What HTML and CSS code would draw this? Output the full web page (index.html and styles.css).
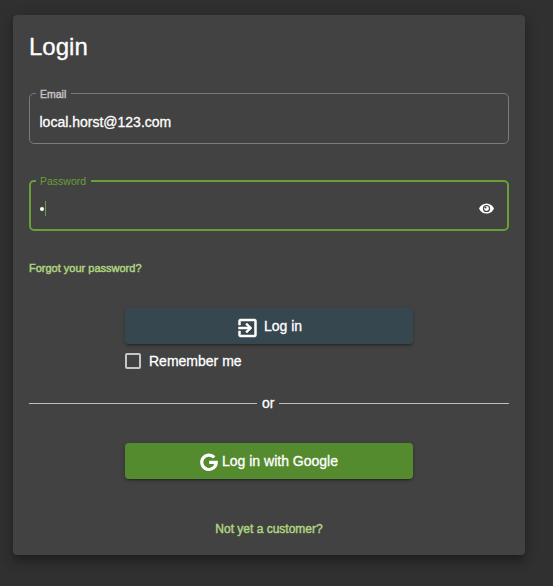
FILE: index.html
```html
<!DOCTYPE html>
<html lang="en">
<head>
<meta charset="utf-8">
<title>Login</title>
<link rel="stylesheet" href="styles.css">
</head>
<body>
<main class="card">
  <h1 class="title">Login</h1>
  <fieldset class="field">
    <legend class="label">Email</legend>
    <div class="control"><span class="value">local.horst@123.com</span></div>
  </fieldset>
  <fieldset class="field field-focused">
    <legend class="label">Password</legend>
    <div class="control">
      <span class="dot"></span><span class="caret"></span>
      <svg class="eye" viewBox="1 4 22 16"><path fill="#fff" fill-rule="evenodd" d="M12 4.500C7 4.500 2.700 7.600 1 12c1.700 4.400 6 7.500 11 7.500s9.300-3.100 11-7.500c-1.700-4.400-6-7.500-11-7.500zM12 17.300a5.300 5.300 0 1 1 0-10.600 5.300 5.300 0 0 1 0 10.600z"/><circle cx="12" cy="12" r="3.600" fill="#fff"/><circle cx="10.600" cy="10.600" r="1.500" fill="#424242"/></svg>
    </div>
  </fieldset>
  <a class="link forgot">Forgot your password?</a>
  <div class="actions">
    <button class="button button-login">
      <svg class="login-icon" viewBox="3 3 18 18" fill="#fff" stroke="#fff" stroke-width=".5"><path d="M10.090 15.590L11.500 17l5-5-5-5-1.410 1.410L12.670 11H3v2h9.670l-2.580 2.590zM19 3H5a2 2 0 0 0-2 2v4h2V5h14v14H5v-4H3v4a2 2 0 0 0 2 2h14a2 2 0 0 0 2-2V5a2 2 0 0 0-2-2z"/></svg>
      <span>Log in</span>
    </button>
    <label class="remember"><span class="checkbox"></span><span>Remember me</span></label>
  </div>
  <div class="divider"><span>or</span></div>
  <button class="button button-google">
    <svg class="google-icon" viewBox="0 0 18 19"><path fill="none" stroke="#fff" stroke-width="3.200" d="M14.300 4.400A7.200 7.200 0 1 0 16.200 9.400H9.200"/></svg>
    <span>Log in with Google</span>
  </button>
  <a class="link signup">Not yet a customer?</a>
</main>
</body>
</html>
```

FILE: styles.css
```css
* { box-sizing: border-box; }
body {
  margin: 0;
  padding: 15px 28px 31px 13px;
  height: 586px;
  background: #303030;
  color: #fff;
  font: 14px/20px "Liberation Sans", Arial, sans-serif;
  -webkit-text-stroke: 0.3px currentColor;
  overflow: hidden;
}
.card {
  display: flex;
  flex-direction: column;
  height: 540px;
  padding: 16px;
  border-radius: 4px;
  background: #424242;
  box-shadow: 0 5px 5px -3px rgba(0,0,0,.2), 0 8px 10px 1px rgba(0,0,0,.14), 0 3px 14px 2px rgba(0,0,0,.12);
}
.title { margin: 0 0 24px; font-size: 24px; line-height: 32px; font-weight: 400; }
.field {
  min-width: 0;
  height: 57px;
  margin: 0;
  padding: 0 10px;
  border: 1px solid #7b7b7b;
  border-radius: 5px;
}
.label {
  height: 13px;
  margin-left: -4px;
  padding: 0 5px 0 4px;
  color: #c6c6c6;
  font-size: 10.5px;
  line-height: 14px;
  -webkit-text-stroke-width: 0.4px;
}
.value { margin-left: -0.5px; }
.control { display: flex; align-items: center; height: 43px; }
.field-focused {
  margin-top: 30px;
  padding: 0 9px;
  border: 2px solid #689f38;
}
.field-focused .label { color: #689f38; -webkit-text-stroke: 0; }
.dot { width: 4px; height: 4px; border-radius: 2px; background: #fff; }
.caret { width: 1px; height: 15px; margin-left: 1px; background: #689f38; }
.eye { width: 15px; height: 11px; margin-left: auto; margin-right: 4px; }
.link { color: #aed581; font-size: 11px; line-height: 16px; -webkit-text-stroke-width: 0.45px; }
.forgot { margin-top: 29px; }
.actions { width: 288px; margin: 32px auto 0; }
.button {
  display: flex;
  align-items: center;
  justify-content: center;
  width: 288px;
  height: 36px;
  padding: 0;
  border: 0;
  border-radius: 4px;
  color: #fff;
  font: inherit;
  -webkit-text-stroke: inherit;
  box-shadow: 0 3px 1px -2px rgba(0,0,0,.2), 0 2px 2px rgba(0,0,0,.14), 0 1px 5px rgba(0,0,0,.12);
}
.button-login { background: #37474f; padding-left: 2px; }
.login-icon { width: 19px; height: 18px; margin: 3px 7px 0 0; overflow: visible; }
.remember { display: flex; align-items: center; gap: 8px; margin-top: 7px; }
.checkbox { width: 16px; height: 16px; border: 2px solid #c6c6c6; border-radius: 2px; }
.divider { display: flex; align-items: center; gap: 5px; margin-top: 22px; }
.divider::before, .divider::after { content: ""; flex: 1; height: 1px; background: #bdbdbd; }
.divider::before { flex: 0 0 228px; }
.button-google { align-self: center; margin-top: 30px; background: #558b2f; }
.google-icon { width: 18px; height: 19px; margin: 2px 4px 0 0; }
.signup { align-self: center; margin-top: 42px; font-size: 12px; }
```
